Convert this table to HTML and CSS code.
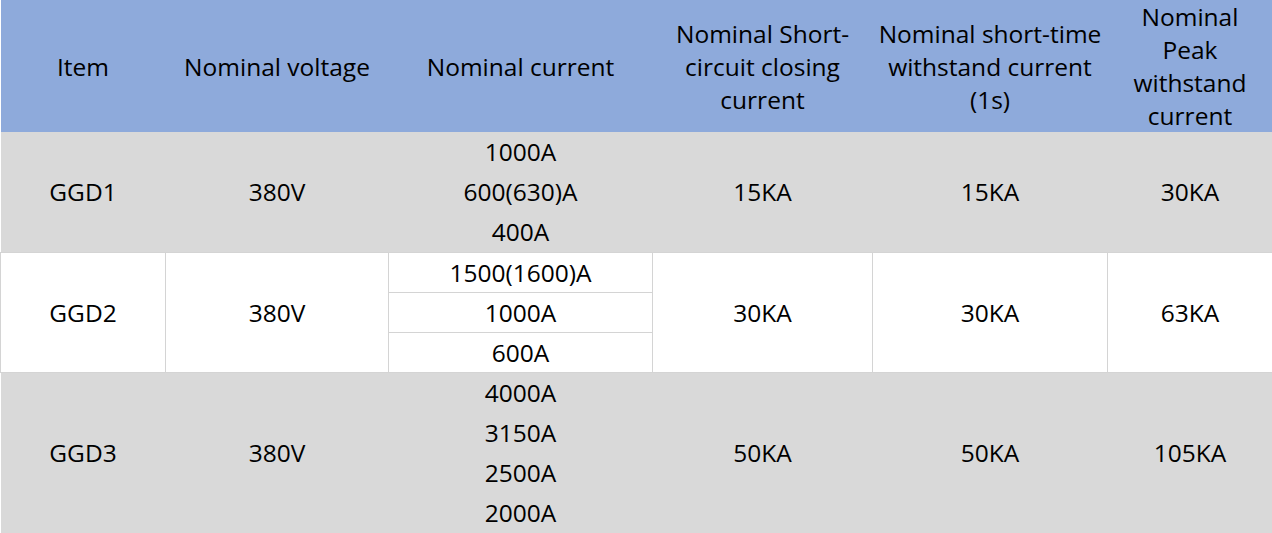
FILE: index.html
```html
<!DOCTYPE html>
<html>
<head>
<meta charset="utf-8">
<link rel="stylesheet" href="styles.css">
</head>
<body>
<table class="spec">
  <colgroup>
    <col class="c1"><col class="c2"><col class="c3"><col class="c4"><col class="c5"><col class="c6">
  </colgroup>
  <thead>
    <tr>
      <th>Item</th>
      <th>Nominal voltage</th>
      <th>Nominal current</th>
      <th>Nominal Short-circuit closing current</th>
      <th>Nominal short-time withstand current (1s)</th>
      <th>Nominal Peak withstand current</th>
    </tr>
  </thead>
  <tbody>
    <tr class="gray">
      <td>GGD1</td>
      <td>380V</td>
      <td class="multi">1000A<br>600(630)A<br>400A</td>
      <td>15KA</td>
      <td>15KA</td>
      <td>30KA</td>
    </tr>
    <tr class="white">
      <td rowspan="3">GGD2</td>
      <td rowspan="3">380V</td>
      <td class="sub">1500(1600)A</td>
      <td rowspan="3">30KA</td>
      <td rowspan="3">30KA</td>
      <td rowspan="3">63KA</td>
    </tr>
    <tr class="white"><td class="sub">1000A</td></tr>
    <tr class="white"><td class="sub">600A</td></tr>
    <tr class="gray">
      <td>GGD3</td>
      <td>380V</td>
      <td class="multi">4000A<br>3150A<br>2500A<br>2000A</td>
      <td>50KA</td>
      <td>50KA</td>
      <td>105KA</td>
    </tr>
  </tbody>
</table>
</body>
</html>
```
FILE: styles.css
```css
html, body {
  margin: 0;
  padding: 0;
  background: #ffffff;
}
.spec {
  width: 1272px;
  table-layout: fixed;
  border-collapse: collapse;
  font-family: "Open Sans", "Noto Sans", sans-serif;
  font-size: 24.5px;
  color: #000;
}
.c1 { width: 165px; }
.c2 { width: 223px; }
.c3 { width: 264px; }
.c4 { width: 220px; }
.c5 { width: 235px; }
.c6 { width: 165px; }
.spec th {
  background: #8eaadb;
  font-weight: normal;
  line-height: 33px;
  height: 132px;
  padding: 0 6px;
  text-align: center;
  vertical-align: middle;
  border: 0;
}
.spec td {
  text-align: center;
  vertical-align: middle;
  padding: 0 4px;
  line-height: 40px;
  border: 0;
}
.gray td { background: #d9d9d9; }
.white td {
  background: #ffffff;
  border: 1px solid #d4d4d4;
}
.white td.sub {
  height: 39px;
  line-height: 39px;
}
```
